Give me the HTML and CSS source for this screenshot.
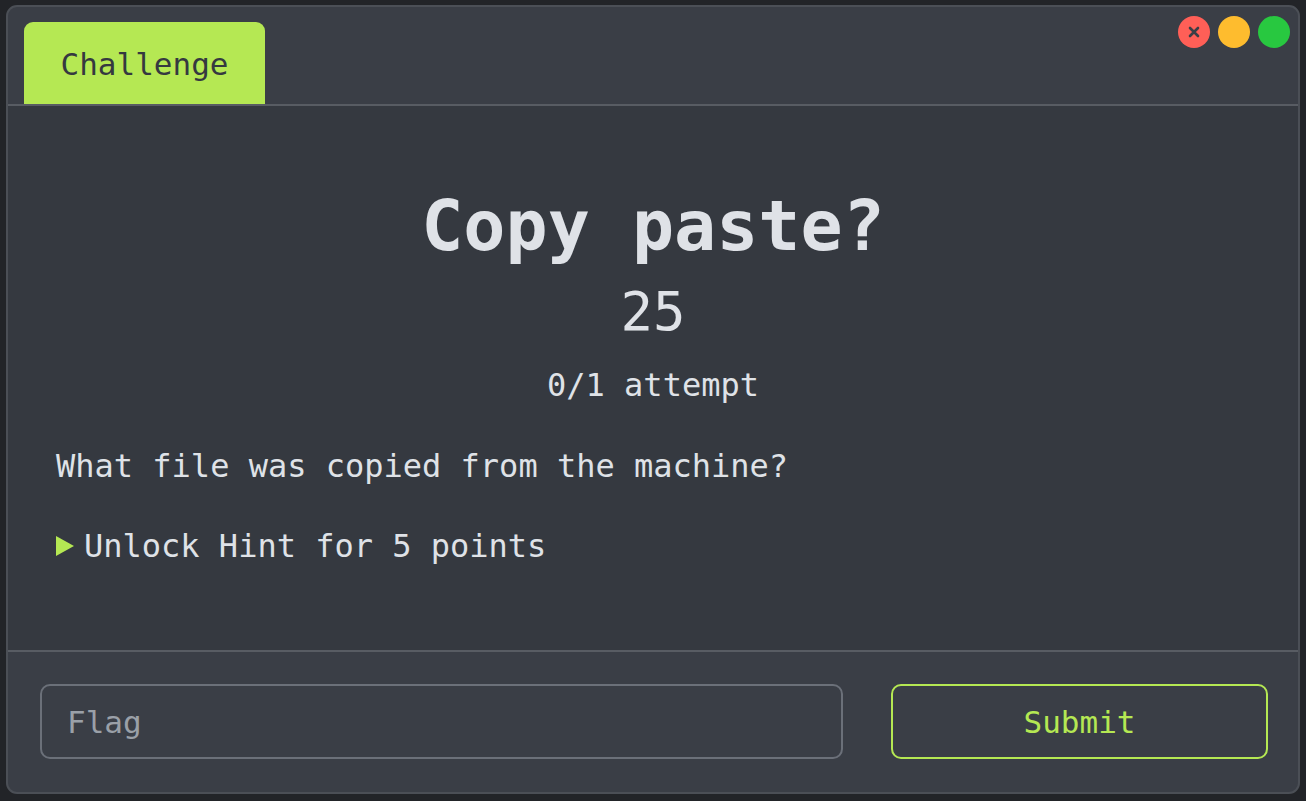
FILE: index.html
```html
<!DOCTYPE html>
<html>
<head>
<meta charset="utf-8">
<link rel="stylesheet" href="styles.css">
</head>
<body>
<div class="window">
  <div class="header">
    <div class="tab">Challenge</div>
    <div class="lights">
      <span class="light red"><svg width="12" height="12" viewBox="0 0 12 12"><path d="M2 2L10 10M10 2L2 10" stroke="#3a3e46" stroke-width="2.6" stroke-linecap="round"/></svg></span>
      <span class="light yellow"></span>
      <span class="light green"></span>
    </div>
  </div>
  <div class="content">
    <h1 class="title">Copy paste?</h1>
    <div class="points">25</div>
    <div class="attempts">0/1 attempt</div>
    <p class="question">What file was copied from the machine?</p>
    <div class="hint"><span class="tri"></span>Unlock Hint for 5 points</div>
  </div>
  <div class="footer">
    <div class="flag">Flag</div>
    <div class="submit">Submit</div>
  </div>
</div>
</body>
</html>
```
FILE: styles.css
```css
* { box-sizing: border-box; }
html, body { margin: 0; padding: 0; }
body {
  background: #222428;
  width: 1306px;
  height: 801px;
  padding: 5px 6px 0 6px;
  font-family: "DejaVu Sans Mono", "Liberation Mono", monospace;
  color: #dfe2e7;
}
.window {
  width: 1294px;
  height: 789px;
  border: 2px solid #4b4f56;
  border-radius: 11px;
  background: #3a3e46;
  display: flex;
  flex-direction: column;
  overflow: hidden;
}
.header {
  height: 99px;
  border-bottom: 2px solid #585c63;
  display: flex;
  align-items: flex-end;
  justify-content: space-between;
  padding: 0 8px 0 16px;
  position: relative;
}
.tab {
  width: 241px;
  height: 82px;
  background: #b5e853;
  border-radius: 9px 9px 0 0;
  color: #353940;
  font-size: 31px;
  display: flex;
  align-items: center;
  justify-content: center;
  padding-top: 2px;
}
.lights {
  position: absolute;
  top: 9px;
  right: 8px;
  display: flex;
  gap: 8px;
}
.light {
  width: 32px;
  height: 32px;
  border-radius: 50%;
  display: flex;
  align-items: center;
  justify-content: center;
}
.red { background: #ff5f57; }
.yellow { background: #febc2e; }
.green { background: #28c840; }
.content {
  flex: 1;
  background: #353940;
  padding: 0 48px;
  border-bottom: 2px solid #585c63;
}
.title {
  margin: 80px 0 0 0;
  font-size: 70px;
  font-weight: bold;
  text-align: center;
  line-height: 80px;
  color: #dfe2e7;
}
.points {
  margin-top: 16px;
  font-size: 54px;
  text-align: center;
  line-height: 60px;
}
.attempts {
  margin-top: 21px;
  font-size: 32px;
  text-align: center;
  line-height: 44px;
}
.question {
  margin: 37px 0 0 0;
  font-size: 32px;
  line-height: 44px;
}
.hint {
  margin-top: 36px;
  font-size: 32px;
  line-height: 44px;
  display: flex;
  align-items: center;
}
.tri {
  width: 0;
  height: 0;
  border-left: 18px solid #b5e853;
  border-top: 10px solid transparent;
  border-bottom: 10px solid transparent;
  margin-right: 10px;
}
.footer {
  height: 140px;
  display: grid;
  grid-template-columns: 1fr 377px;
  gap: 48px;
  padding: 32px 30px 33px 32px;
}
.flag {
  border: 2px solid #6b7079;
  border-radius: 10px;
  color: #9aa0a8;
  font-size: 31px;
  display: flex;
  align-items: center;
  padding-left: 25px;
}
.submit {
  border: 2px solid #b5e853;
  border-radius: 10px;
  color: #b5e853;
  font-size: 31px;
  display: flex;
  align-items: center;
  justify-content: center;
}
```
